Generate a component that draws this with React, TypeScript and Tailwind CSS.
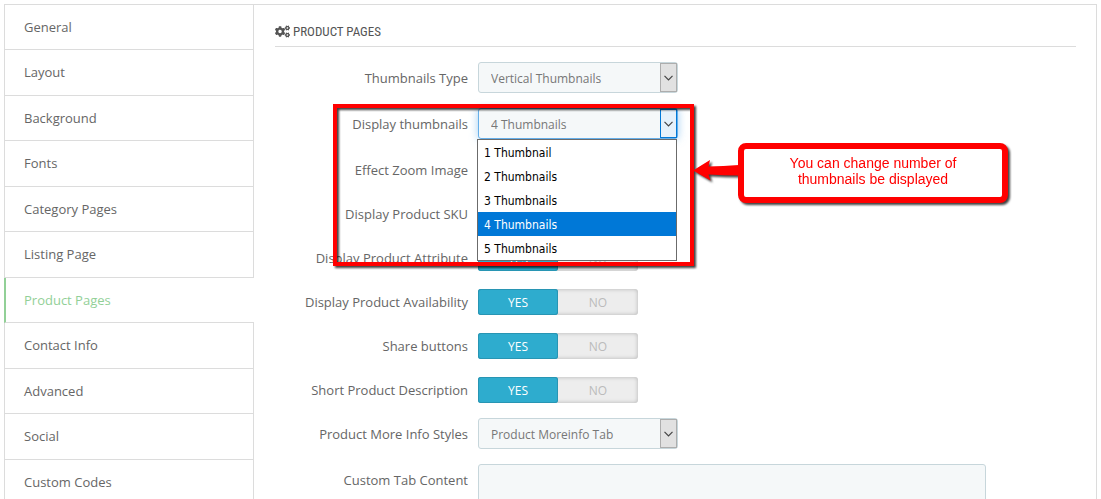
import { useState } from 'react';
import { FaCogs } from 'react-icons/fa';

const sections = [
  'General',
  'Layout',
  'Background',
  'Fonts',
  'Category Pages',
  'Listing Page',
  'Product Pages',
  'Contact Info',
  'Advanced',
  'Social',
  'Custom Codes',
];

const thumbnailCounts = ['1 Thumbnail', '2 Thumbnails', '3 Thumbnails', '4 Thumbnails', '5 Thumbnails'];

function Sidebar() {
  return (
    <nav className="w-[249px] shrink-0">
      <ul className="grid min-h-[500px] auto-rows-fr">
        {sections.map((name) => (
          <li key={name} className="flex">
            <a
              href="#"
              className={
                name === 'Product Pages'
                  ? '-ml-px flex flex-1 items-center border-b border-l-2 border-b-[#dcdcdc] border-l-[#92d097] pt-px pl-[18px] text-[#92d097]'
                  : 'flex flex-1 items-center border-b border-r border-[#dcdcdc] pt-px pl-[19px]'
              }
            >
              {name}
            </a>
          </li>
        ))}
      </ul>
    </nav>
  );
}

function Row({ label, id, children }: { label: string; id: string; children: React.ReactNode }) {
  return (
    <div className="relative flex items-start gap-2.5">
      <label htmlFor={id} className="h-[29px] w-[193px] shrink-0 text-right leading-[33px]">
        {label}
      </label>
      {children}
    </div>
  );
}

function Select({ id, options, value, open }: { id: string; options: string[]; value: string; open?: boolean }) {
  const [selected, setSelected] = useState(value);
  return (
    <div className="relative w-[200px]">
      <select
        id={id}
        value={selected}
        onChange={(e) => setSelected(e.target.value)}
        className={
          open
            ? 'block h-[31px] w-full appearance-none rounded-[3px] border border-[#66afe9] bg-[#f5f8f9] pt-0.5 pl-3 text-xs text-[#777] shadow-[0_0_8px_rgba(102,175,233,0.6)] outline-none'
            : 'block h-[31px] w-full appearance-none rounded-[3px] border border-[#c7d6db] bg-[#f5f8f9] pt-0.5 pl-3 text-xs text-[#777] outline-none'
        }
      >
        {options.map((o) => (
          <option key={o}>{o}</option>
        ))}
      </select>
      <span
        className={
          open
            ? 'pointer-events-none absolute inset-y-px right-px flex w-[17px] items-center justify-center border border-[#0078d7] bg-[#e5f1fb]'
            : 'pointer-events-none absolute inset-y-px right-px flex w-[17px] items-center justify-center border border-[#adadad] bg-[#e1e1e1]'
        }
      >
        <svg width="9" height="6" viewBox="0 0 9 6" fill="none" stroke="#444" strokeWidth="1.2">
          <path d="M0.5 0.8 4.5 4.8 8.5 0.8" />
        </svg>
      </span>
      {open && (
        <ul
          role="listbox"
          className="absolute top-[31px] -left-px z-10 w-[200px] border border-[#6b6b6b] bg-white font-['DejaVu_Sans_Condensed','DejaVu_Sans',sans-serif] text-xs text-black"
        >
          {options.map((o) => (
            <li
              key={o}
              role="option"
              aria-selected={o === selected}
              onClick={() => setSelected(o)}
              className={o === selected ? 'h-6 bg-[#0078d7] pl-1.5 leading-[26px] text-white' : 'h-6 pl-1.5 leading-[26px]'}
            >
              {o}
            </li>
          ))}
        </ul>
      )}
    </div>
  );
}

function Switch({ id }: { id: string }) {
  return (
    <div className="relative mt-[3px] flex h-[26px] w-40 rounded-[3px] bg-[#ededed] text-center text-xs leading-7 text-[#bbb] shadow-[inset_0_0_4px_rgba(0,0,0,0.25)]">
      <input type="radio" id={id} name={id} defaultChecked className="peer/yes sr-only" />
      <label
        htmlFor={id}
        className="w-20 rounded-[3px] peer-checked/yes:bg-[#2eacce] peer-checked/yes:text-white peer-checked/yes:shadow-[inset_0_0_0_1px_#2895b3]"
      >
        YES
      </label>
      <input type="radio" id={`${id}-no`} name={id} className="peer/no sr-only" />
      <label htmlFor={`${id}-no`} className="w-20 rounded-[3px] peer-checked/no:bg-[#e08f95] peer-checked/no:text-white">
        NO
      </label>
    </div>
  );
}

// Red frame and speech box pointing at the open drop-down
function Annotation() {
  return (
    <>
      <div className="pointer-events-none absolute -top-1 left-[58px] z-20 h-[162px] w-[361px] border-4 border-[#f00] drop-shadow-[2px_2px_1px_rgba(0,0,0,0.75)]" />
      <div className="absolute top-[35px] left-[418px] z-30 flex items-start drop-shadow-[2px_2px_1px_rgba(0,0,0,0.75)]">
        <svg width="46" height="60" viewBox="0 0 46 60" fill="#f00" className="-mr-px shrink-0">
          <path d="M0 27.5 17 17 15.5 23.5Q30 23 46 22V32.5Q30 32.5 15.5 31.5L17.5 37.5Z" />
        </svg>
        <p className="h-[60px] w-[270px] rounded-lg border-6 border-[#f00] bg-white px-10 pt-1.5 text-center font-['Liberation_Sans',Arial,sans-serif] text-sm leading-4 text-[#f00]">
          You can change number of thumbnails be displayed
        </p>
      </div>
    </>
  );
}

export default function App() {
  return (
    <div className="h-screen overflow-hidden bg-white p-1 font-['Open_Sans','Noto_Sans',sans-serif] text-[13px] text-[#666]">
      <div className="flex border border-[#dcdcdc]">
        <Sidebar />
        <main className="flex-1 px-[21px] pt-3 pr-5">
          <h1 className="flex h-[30px] items-center gap-[3px] border-b border-[#dcdcdc] font-['Liberation_Sans_Narrow','Roboto_Condensed',sans-serif] text-[13px] text-[#555]">
            <FaCogs className="size-[15px]" />
            PRODUCT PAGES
          </h1>
          <form className="flex flex-col gap-[15px] pt-[15px]">
            <Row label="Thumbnails Type" id="type">
              <Select id="type" value="Vertical Thumbnails" options={['Vertical Thumbnails', 'Horizontal Thumbnails']} />
            </Row>
            <Row label="Display thumbnails" id="count">
              <Select id="count" value="4 Thumbnails" options={thumbnailCounts} open />
              <Annotation />
            </Row>
            <Row label="Effect Zoom Image" id="zoom">
              <Switch id="zoom" />
            </Row>
            <Row label="Display Product SKU" id="sku">
              <Switch id="sku" />
            </Row>
            <Row label="Display Product Attribute" id="attribute">
              <Switch id="attribute" />
            </Row>
            <Row label="Display Product Availability" id="availability">
              <Switch id="availability" />
            </Row>
            <Row label="Share buttons" id="share">
              <Switch id="share" />
            </Row>
            <Row label="Short Product Description" id="short">
              <Switch id="short" />
            </Row>
            <Row label="Product More Info Styles" id="info">
              <Select id="info" value="Product Moreinfo Tab" options={['Product Moreinfo Tab', 'Product Moreinfo Accordion']} />
            </Row>
            <Row label="Custom Tab Content" id="content">
              <textarea
                id="content"
                rows={5}
                className="mr-[90px] flex-1 resize-none rounded-[3px] border border-[#c7d6db] bg-[#f5f8f9] p-2 outline-none"
              />
            </Row>
          </form>
        </main>
      </div>
    </div>
  );
}
